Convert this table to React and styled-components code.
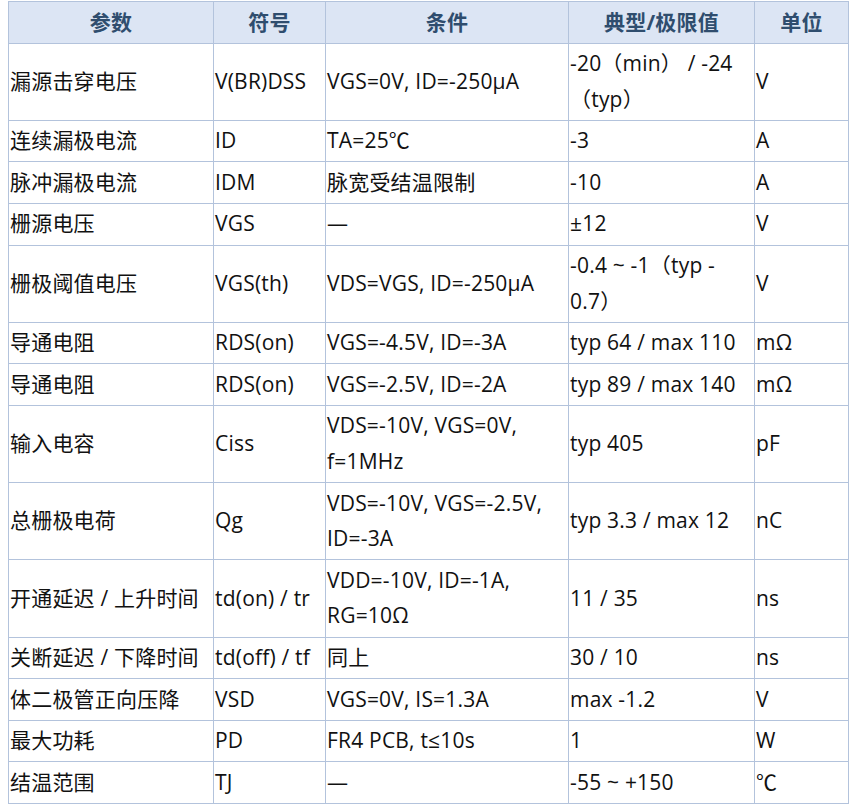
import React from "react";
import styled, { createGlobalStyle } from "styled-components";

const Global = createGlobalStyle`
  html, body { margin: 0; padding: 0; background: #ffffff; }
  body { padding: 1px 0 0 8px; }
`;

const Table = styled.table`
  border-collapse: collapse;
  table-layout: fixed;
  width: 841px;
  font-family: "Open Sans", "Noto Sans CJK SC", sans-serif;
  font-size: 21px;
  line-height: 35.6px;
  letter-spacing: 0.2px;
  color: #111111;
  border: 1px solid #b3c3dc;
`;

const Th = styled.th`
  background: #dce5f4;
  color: #2f4d6e;
  font-weight: 700;
  text-align: center;
  padding: 2.5px 1px;
  border: 1px solid #b3c3dc;
`;

const Td = styled.td`
  text-align: left;
  vertical-align: middle;
  padding: 2.5px 1px;
  border: 1px solid #b3c3dc;
  white-space: nowrap;
`;

const cols = [205, 112, 243, 186, 94];
const headers = ["参数", "符号", "条件", "典型/极限值", "单位"];

const rows = [
  ["漏源击穿电压", "V(BR)DSS", "VGS=0V, ID=-250μA", ["-20（min） / -24", "（typ）"], "V"],
  ["连续漏极电流", "ID", "TA=25℃", "-3", "A"],
  ["脉冲漏极电流", "IDM", "脉宽受结温限制", "-10", "A"],
  ["栅源电压", "VGS", "—", "±12", "V"],
  ["栅极阈值电压", "VGS(th)", "VDS=VGS, ID=-250μA", ["-0.4 ~ -1（typ -", "0.7）"], "V"],
  ["导通电阻", "RDS(on)", "VGS=-4.5V, ID=-3A", "typ 64 / max 110", "mΩ"],
  ["导通电阻", "RDS(on)", "VGS=-2.5V, ID=-2A", "typ 89 / max 140", "mΩ"],
  ["输入电容", "Ciss", ["VDS=-10V, VGS=0V,", "f=1MHz"], "typ 405", "pF"],
  ["总栅极电荷", "Qg", ["VDS=-10V, VGS=-2.5V,", "ID=-3A"], "typ 3.3 / max 12", "nC"],
  ["开通延迟 / 上升时间", "td(on) / tr", ["VDD=-10V, ID=-1A,", "RG=10Ω"], "11 / 35", "ns"],
  ["关断延迟 / 下降时间", "td(off) / tf", "同上", "30 / 10", "ns"],
  ["体二极管正向压降", "VSD", "VGS=0V, IS=1.3A", "max -1.2", "V"],
  ["最大功耗", "PD", "FR4 PCB, t≤10s", "1", "W"],
  ["结温范围", "TJ", "—", "-55 ~ +150", "℃"],
];

function Cell({ value }) {
  if (Array.isArray(value)) {
    return (
      <Td>
        {value.map((line, i) => (
          <React.Fragment key={i}>
            {i > 0 && <br />}
            {line}
          </React.Fragment>
        ))}
      </Td>
    );
  }
  return <Td>{value}</Td>;
}

export default function App() {
  return (
    <>
      <Global />
      <Table>
        <colgroup>
          {cols.map((w, i) => (
            <col key={i} style={{ width: w }} />
          ))}
        </colgroup>
        <thead>
          <tr>
            {headers.map((h) => (
              <Th key={h}>{h}</Th>
            ))}
          </tr>
        </thead>
        <tbody>
          {rows.map((r, i) => (
            <tr key={i}>
              {r.map((c, j) => (
                <Cell key={j} value={c} />
              ))}
            </tr>
          ))}
        </tbody>
      </Table>
    </>
  );
}
